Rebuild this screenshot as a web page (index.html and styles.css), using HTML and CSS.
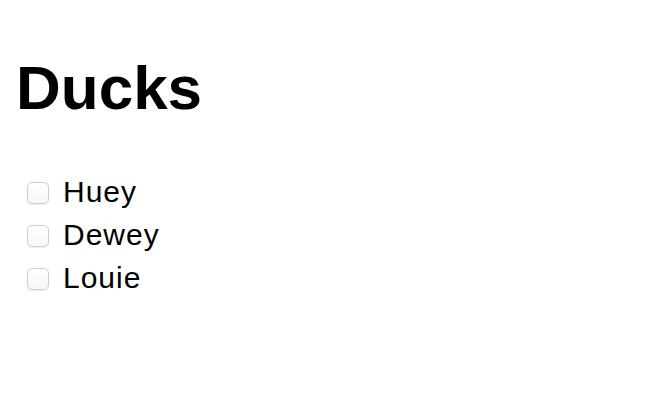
FILE: index.html
```html
<!DOCTYPE html>
<html>
<head>
<meta charset="utf-8">
<link rel="stylesheet" href="styles.css">
</head>
<body>
<main class="page">
  <h1 class="title">Ducks</h1>
  <ul class="list">
    <li class="item"><input type="checkbox" class="check" id="d1"><label for="d1" class="label">Huey</label></li>
    <li class="item"><input type="checkbox" class="check" id="d2"><label for="d2" class="label">Dewey</label></li>
    <li class="item"><input type="checkbox" class="check" id="d3"><label for="d3" class="label">Louie</label></li>
  </ul>
</main>
</body>
</html>
```
FILE: styles.css
```css
html, body {
  margin: 0;
  padding: 0;
  background: #fff;
  color: #000;
}
.page {
  padding: 58px 0 0 16px;
}
.title {
  margin: 0;
  font-family: "Liberation Sans", Arial, sans-serif;
  font-weight: 700;
  font-size: 62px;
  line-height: 60px;
}
.list {
  list-style: none;
  margin: 52px 0 0 0;
  padding: 0 0 0 11px;
}
.item {
  display: flex;
  align-items: center;
  height: 43px;
  gap: 14px;
}
.check {
  appearance: none;
  -webkit-appearance: none;
  margin: 3px 0 0 0;
  width: 22px;
  height: 22px;
  box-sizing: border-box;
  border: 1px solid #cfcfcf;
  border-radius: 5px;
  background: linear-gradient(#ffffff, #f7f7f7);
  box-shadow: 0 0.5px 1px rgba(0,0,0,0.08);
}
.label {
  font-family: "Liberation Sans", Arial, sans-serif;
  font-size: 30px;
  letter-spacing: 1px;
  line-height: 43px;
}
```
